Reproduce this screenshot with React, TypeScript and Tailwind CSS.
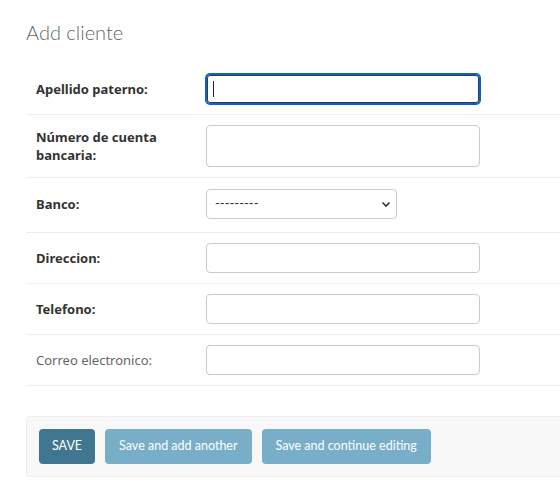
import React from "react";

const labelFont = { fontFamily: '"Segoe UI", "Noto Sans", sans-serif' };
const font = { fontFamily: '"Segoe UI", Lato, "Noto Sans", sans-serif' };

const Row = ({
  label,
  required = true,
  extra = "",
  children,
}: {
  label: string;
  required?: boolean;
  extra?: string;
  children: React.ReactNode;
}) => (
  <div className={"flex items-center border-b border-[#eee] p-[10px] " + extra}>
    <label
      style={labelFont}
      className={
        "w-[170px] shrink-0 pr-[10px] text-[13px] leading-[18px] " +
        (required ? "font-bold text-[#333]" : "text-[#666]")
      }
    >
      {label}
    </label>
    {children}
  </div>
);

const Input = ({ h = "h-[30px]" }: { h?: string }) => (
  <div className={"w-[274px] rounded-[4px] border border-[#ccc] bg-white " + h} />
);

export default function App() {
  return (
    <div className="min-h-screen bg-white pl-[26px] pt-[20px]" style={font}>
      <h1 className="mb-[20px] text-[20px] font-light leading-[24px] text-[#666]">Add cliente</h1>

      <div>
        <Row label="Apellido paterno:">
          <div className="flex h-[30px] w-[274px] items-center rounded-[4px] border border-[#0b5fd6] bg-white pl-[6px] shadow-[0_0_0_1px_#0b5fd6,inset_0_0_0_1px_#3a3a3a]">
            <span className="h-[16px] w-px bg-[#222]" />
          </div>
        </Row>
        <Row label="Número de cuenta bancaria:">
          <Input h="h-[42px]" />
        </Row>
        <Row label="Banco:" extra="pt-[11px] pb-[13px]">
          <div className="flex h-[30px] w-[191px] items-center justify-between rounded-[4px] border border-[#ccc] bg-white pl-[8px] pr-[4px] text-[13px] text-[#333]">
            <span>---------</span>
            <svg width="12" height="12" viewBox="0 0 12 12">
              <path d="M2.5 4.5 L6 8 L9.5 4.5" fill="none" stroke="#333" strokeWidth="1.6" />
            </svg>
          </div>
        </Row>
        <Row label="Direccion:">
          <Input />
        </Row>
        <Row label="Telefono:">
          <Input />
        </Row>
        <Row label="Correo electronico:" required={false}>
          <Input />
        </Row>
      </div>

      <div className="mt-[30px] flex gap-[10px] rounded-l-[4px] border border-r-0 border-[#eee] bg-[#f8f8f8] p-[12px]">
        <button className="h-[35px] rounded-[4px] bg-[#417690] px-[13px] text-[12.5px] text-white">
          SAVE
        </button>
        <button className="h-[35px] rounded-[4px] bg-[#79aec8] px-[14px] text-[12.5px] text-white">
          Save and add another
        </button>
        <button className="h-[35px] rounded-[4px] bg-[#79aec8] px-[14px] text-[12.5px] text-white">
          Save and continue editing
        </button>
      </div>
    </div>
  );
}
